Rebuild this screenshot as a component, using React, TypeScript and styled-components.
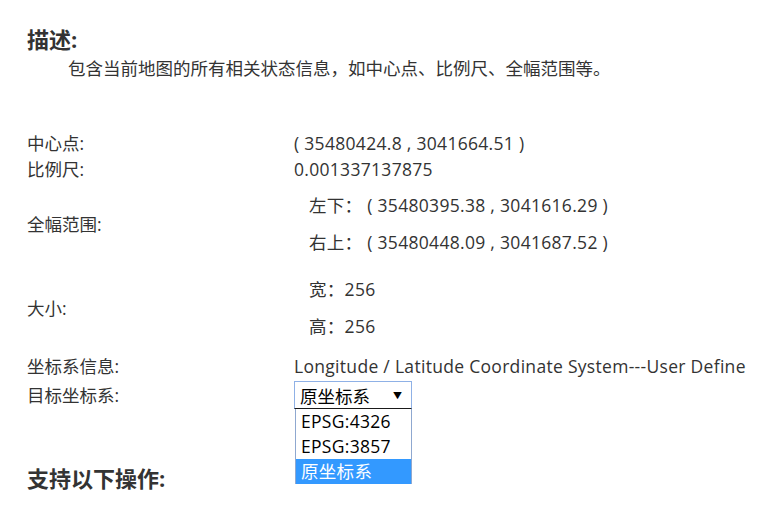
import React from "react";
import styled, { createGlobalStyle } from "styled-components";

const GlobalStyle = createGlobalStyle`
  html, body {
    margin: 0;
    padding: 0;
    background: #fff;
  }
  body {
    font-family: "Open Sans", "Noto Sans CJK SC", sans-serif;
    font-size: 17.5px;
    color: #333;
  }
`;

const Page = styled.div`
  padding: 27px 0 0 27px;
  width: 742px;
  height: 485px;
  overflow: hidden;
`;

const Heading = styled.h3<{ $gap?: number }>`
  margin: ${(p) => p.$gap ?? 0}px 0 0;
  font-size: 22px;
  line-height: 24px;
  font-weight: 700;
  color: #333;
`;

const Description = styled.p`
  margin: 5px 0 0;
  padding-left: 41px;
  line-height: 24px;
  color: #333;
`;

const InfoTable = styled.div`
  margin-top: 50px;
  display: flex;
  flex-direction: column;
`;

const Row = styled.div<{ $height?: number; $gap?: number }>`
  display: flex;
  align-items: center;
  height: ${(p) => p.$height ?? 26}px;
  margin-top: ${(p) => p.$gap ?? 0}px;
`;

const GroupRow = styled.div`
  display: flex;
  align-items: center;
  padding: 5px 0;
`;

const Label = styled.div`
  width: 267px;
  flex-shrink: 0;
  line-height: 26px;
`;

const Value = styled.div`
  line-height: 26px;
  white-space: nowrap;
  letter-spacing: 0.3px;
`;

const SubList = styled.div`
  display: flex;
  flex-direction: column;
  padding-left: 15px;
`;

const SubRow = styled.div`
  height: 37px;
  line-height: 37px;
  white-space: nowrap;
  letter-spacing: 0.3px;
`;

const SelectWrap = styled.div`
  position: relative;
`;

const SelectBox = styled.div`
  box-sizing: border-box;
  width: 118px;
  height: 28px;
  border: 1px solid #8fb1e6;
  border-bottom-color: #1a1a1a;
  display: flex;
  align-items: center;
  justify-content: space-between;
  padding: 0 9px 0 5px;
  color: #000;
`;

const Arrow = styled.span`
  font-size: 9px;
  color: #000;
`;

const OptionList = styled.div`
  position: absolute;
  top: 28px;
  left: 1px;
  width: 117px;
  box-sizing: border-box;
  border-left: 1px solid #8fa8d0;
  border-right: 1px solid #8fa8d0;
  background: #fff;
  display: flex;
  flex-direction: column;
`;

const Option = styled.div<{ $selected?: boolean }>`
  height: 25px;
  line-height: 25px;
  padding-left: 5px;
  letter-spacing: 0.3px;
  color: ${(p) => (p.$selected ? "#fff" : "#000")};
  background: ${(p) => (p.$selected ? "#3399ff" : "transparent")};
`;

const options = ["EPSG:4326", "EPSG:3857", "原坐标系"];

export default function App() {
  return (
    <Page>
      <GlobalStyle />
      <Heading>描述:</Heading>
      <Description>
        包含当前地图的所有相关状态信息，如中心点、比例尺、全幅范围等。
      </Description>

      <InfoTable>
        <Row>
          <Label>中心点:</Label>
          <Value>( 35480424.8 , 3041664.51 )</Value>
        </Row>
        <Row>
          <Label>比例尺:</Label>
          <Value>0.001337137875</Value>
        </Row>
        <GroupRow>
          <Label>全幅范围:</Label>
          <SubList>
            <SubRow>左下： ( 35480395.38 , 3041616.29 )</SubRow>
            <SubRow>右上： ( 35480448.09 , 3041687.52 )</SubRow>
          </SubList>
        </GroupRow>
        <GroupRow>
          <Label>大小:</Label>
          <SubList>
            <SubRow>宽：256</SubRow>
            <SubRow>高：256</SubRow>
          </SubList>
        </GroupRow>
        <Row $gap={3}>
          <Label>坐标系信息:</Label>
          <Value>Longitude / Latitude Coordinate System---User Define</Value>
        </Row>
        <Row $height={28} $gap={2}>
          <Label>目标坐标系:</Label>
          <SelectWrap>
            <SelectBox>
              <span>原坐标系</span>
              <Arrow>▼</Arrow>
            </SelectBox>
            <OptionList>
              {options.map((o) => (
                <Option key={o} $selected={o === "原坐标系"}>
                  {o}
                </Option>
              ))}
            </OptionList>
          </SelectWrap>
        </Row>
      </InfoTable>

      <Heading $gap={57}>支持以下操作:</Heading>
    </Page>
  );
}
